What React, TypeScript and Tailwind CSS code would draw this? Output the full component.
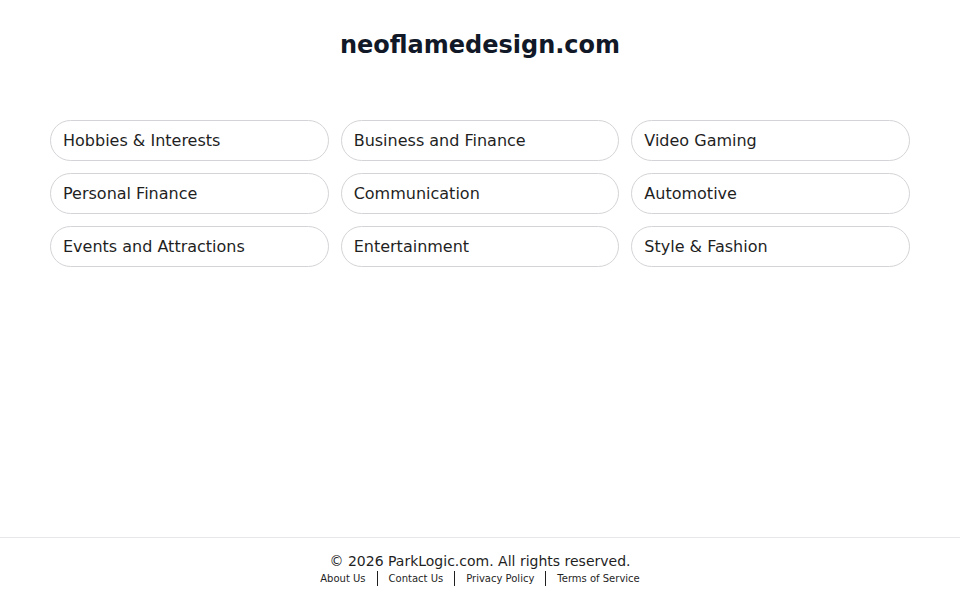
const topics = [
  'Hobbies & Interests',
  'Business and Finance',
  'Video Gaming',
  'Personal Finance',
  'Communication',
  'Automotive',
  'Events and Attractions',
  'Entertainment',
  'Style & Fashion',
]

const links = ['About Us', 'Contact Us', 'Privacy Policy', 'Terms of Service']

export default function App() {
  return (
    <div className="min-h-screen flex flex-col bg-white font-['DejaVu_Sans',sans-serif]">
      <main className="flex-1 px-[50px]">
        <h1 className="pt-[29px] text-center text-[24px] leading-8 font-bold text-[#111827]">
          neoflamedesign.com
        </h1>

        <div className="mt-[59px] grid grid-cols-3 gap-x-[12px] gap-y-[12px]">
          {topics.map((t) => (
            <a
              key={t}
              href="#"
              className="h-[41px] flex items-center px-[12px] rounded-full border border-[#d4d4d8] text-[16px] text-[#1f1f1f]"
            >
              {t}
            </a>
          ))}
        </div>
      </main>

      {/* Footer */}
      <footer className="border-t border-[#e5e7eb] pt-[13px] pb-[14px] text-center">
        <p className="text-[14px] leading-5 text-[#1f1f1f]">
          © 2026 ParkLogic.com. All rights reserved.
        </p>
        <div className="flex justify-center items-center text-[10px] leading-[15px] text-[#1f1f1f]">
          {links.map((l, i) => (
            <span key={l} className="flex items-center">
              {i > 0 && <span className="w-px h-[15px] bg-[#1f1f1f] mx-[11px]" />}
              <a href="#">{l}</a>
            </span>
          ))}
        </div>
      </footer>
    </div>
  )
}
